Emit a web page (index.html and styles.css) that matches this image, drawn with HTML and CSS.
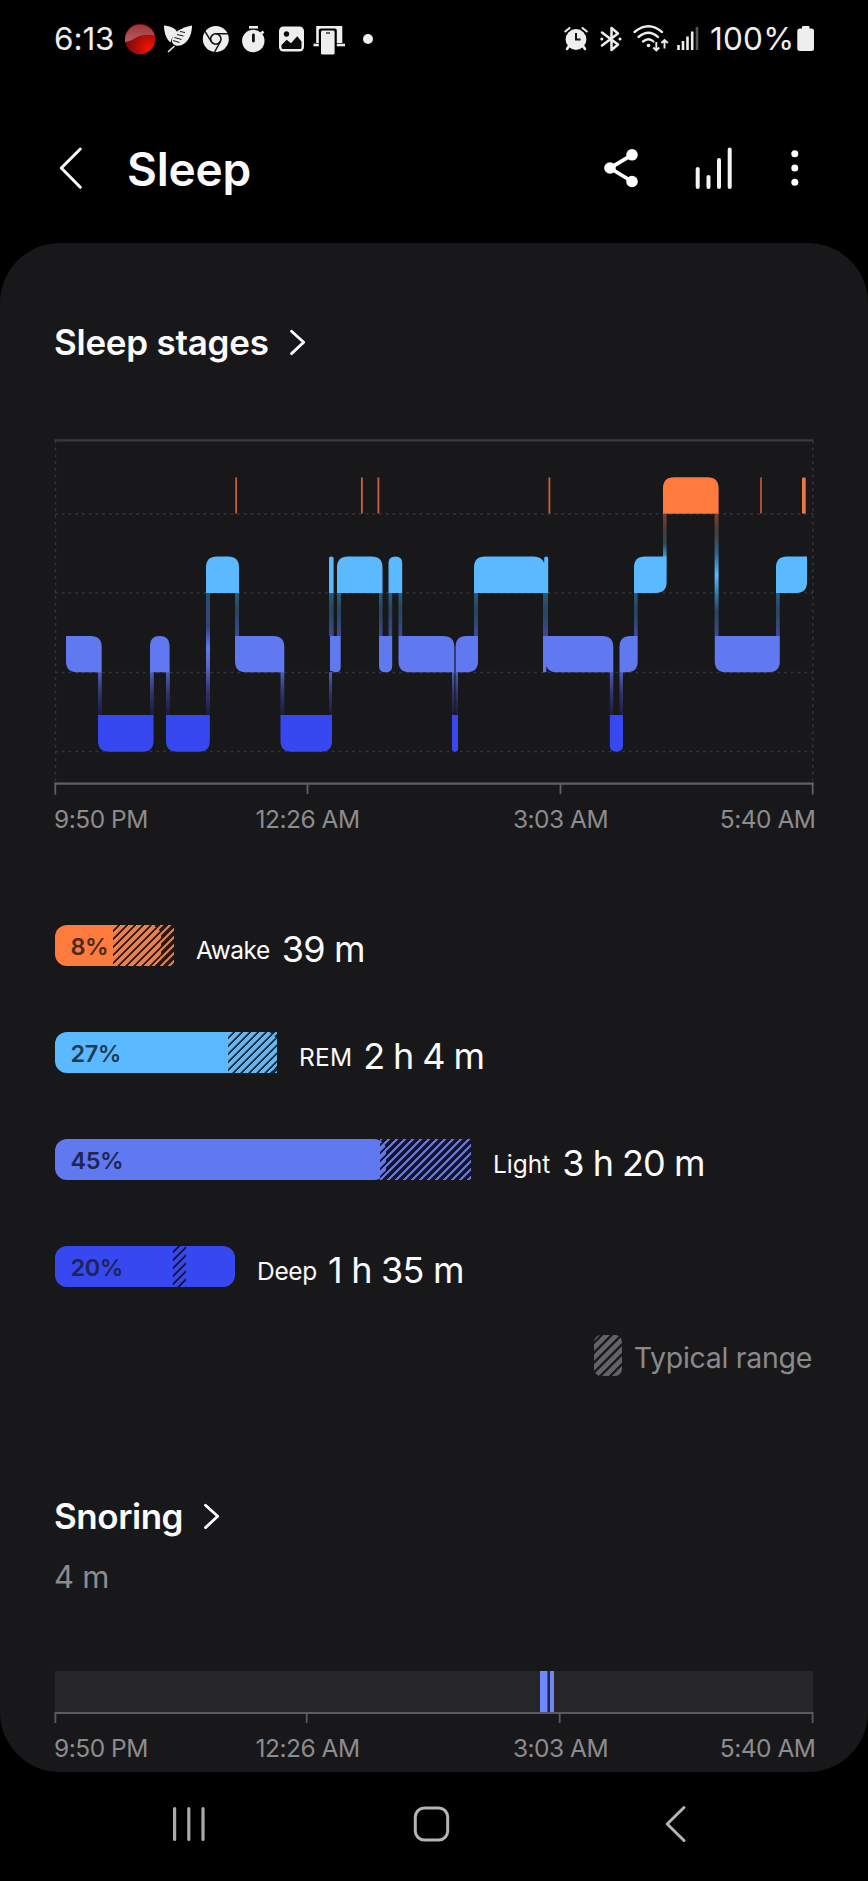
FILE: index.html
```html
<!DOCTYPE html>
<html lang="en">
<head>
<meta charset="utf-8">
<title>Sleep</title>
<link rel="stylesheet" href="styles.css">
</head>
<body>
<div class="status">
  <div class="status-side">
    <span class="clock">6:13</span>
    <svg width="35" height="34" viewBox="125 22 35 34">
      <defs>
        <linearGradient id="redTop" x1="0" y1="0" x2="0" y2="1"><stop offset="0" stop-color="#a0363c"/><stop offset="1" stop-color="#b45c5e"/></linearGradient>
        <radialGradient id="redBase" cx=".8" cy=".8" r=".8"><stop offset="0" stop-color="#f41404"/><stop offset=".5" stop-color="#b40c08"/><stop offset="1" stop-color="#6c0a0c"/></radialGradient>
      </defs>
      <circle cx="140" cy="39" r="15.3" fill="url(#redBase)"/>
      <path d="M125 42A15.3 15.3 0 0 1 154.8 35.5C146 33.5 138 36 133 39.500Q129 41.500 125 42Z" fill="url(#redTop)"/>
    </svg>
    <svg width="38" height="34" viewBox="160 22 38 34">
      <path d="M164 25.500C170 26 175.500 28 177.500 32.500C173 35.500 171 39 170.500 42.500C166 39 164 32 164 25.500Z" fill="#eee"/>
      <path d="M192 25.500C183 27 172.500 32 171.800 40C171.700 43.500 174.500 46 178 45.800C187 45 192 36 192 25.500Z" fill="#eee"/>
      <path d="M174 46.500L168.500 51.500" stroke="#eee" stroke-width="1.600" stroke-linecap="round"/>
      <path d="M180 31.500L185 32.500M177 34.500L183.500 36M174.500 37.500L181.500 39.500M173 40.500L179.500 42.500" stroke="#111" stroke-width="1"/>
    </svg>
    <svg width="37" height="34" viewBox="198 22 37 34">
      <circle cx="215.800" cy="39" r="13" fill="#eee"/>
      <circle cx="215.800" cy="39" r="5.200" fill="#eee" stroke="#111" stroke-width="1.600"/>
      <path d="M215.800 33.800H228M220.300 41.600L214.600 52M211.300 41.600L205 31.300" stroke="#111" stroke-width="1.500" fill="none"/>
    </svg>
    <svg width="37" height="34" viewBox="235 22 37 34">
      <circle cx="253.300" cy="41" r="11.200" fill="#eee"/>
      <path d="M249 27.300H258" stroke="#eee" stroke-width="2.600"/>
      <path d="M260 34.500L263.500 31.500" stroke="#eee" stroke-width="2.600"/>
      <path d="M253.400 35V41" stroke="#111" stroke-width="2.800" stroke-linecap="round"/>
    </svg>
    <svg width="37" height="34" viewBox="272 22 37 34">
      <rect x="279" y="26.500" width="25" height="25" rx="4.500" fill="#eee"/>
      <circle cx="286.500" cy="34" r="2.700" fill="#0a0a0a"/>
      <path d="M281.500 45L286.700 39.800L291 43.300L297.200 36.300L301.500 41.500V47.500Q301.500 49 300 49H283Q281.500 49 281.500 47.500Z" fill="#0a0a0a"/>
    </svg>
    <svg width="41" height="34" viewBox="309 22 41 34">
      <path d="M317.500 43V27.200H341V43" fill="#eee" stroke="#eee" stroke-width="2.600"/>
      <path d="M313.500 45H345" stroke="#eee" stroke-width="2.600"/>
      <rect x="318.800" y="28.500" width="18" height="27" rx="2" fill="#000"/>
      <rect x="321" y="30.600" width="13.600" height="24" rx="1.500" fill="#eee"/>
      <path d="M326 33H330" stroke="#333" stroke-width="1.500"/>
    </svg>
    <svg width="30" height="34" viewBox="350 22 30 34"><circle cx="368" cy="39" r="5" fill="#eee"/></svg>
  </div>
  <div class="status-side">
    <svg width="34" height="34" viewBox="560 22 34 34">
      <circle cx="576" cy="39.500" r="10.400" fill="#eee"/>
      <path d="M565.300 31.500L569.500 28M582.500 28L586.800 31.500" stroke="#eee" stroke-width="2" stroke-linecap="round"/>
      <path d="M569 46L567 49M583 46L585 49" stroke="#eee" stroke-width="2.600" stroke-linecap="round"/>
      <path d="M576 33V39.500H580.500" stroke="#111" stroke-width="2" fill="none"/>
    </svg>
    <svg width="34" height="34" viewBox="594 22 34 34">
      <path d="M602 32.500L618 44.500L611.500 50V28L618 33.500L602 45.500" stroke="#eee" stroke-width="2.500" fill="none" stroke-linejoin="round" stroke-linecap="round"/>
      <circle cx="601.800" cy="39" r="1.500" fill="#eee"/><circle cx="620" cy="39" r="1.600" fill="#eee"/>
    </svg>
    <svg width="45" height="34" viewBox="628 22 45 34">
      <g fill="none" stroke="#eee" stroke-width="2.300" stroke-linecap="round">
        <path d="M634.500 32Q648.500 20.500 662 32"/><path d="M638.500 37Q648.500 28.500 658 37"/><path d="M643 41.500Q648.500 37 653.500 41.500"/>
      </g>
      <circle cx="648.500" cy="45.500" r="1.800" fill="#eee"/>
      <path d="M656.300 42V50M653.300 47.500L656.300 50.500L659.300 47.500M664.500 48.500V40.500M661.500 43L664.500 40L667.800 43" stroke="#eee" stroke-width="1.900" fill="none"/>
    </svg>
    <svg width="32" height="34" viewBox="673 22 32 34">
      <path d="M678.500 45V50M683 41V50M687.500 36.500V50M692.200 31.500V50" stroke="#eee" stroke-width="2.600"/>
      <path d="M697 27V50" stroke="#555" stroke-width="2.600"/>
    </svg>
    <span class="battery-text">100%</span>
    <svg width="26" height="34" viewBox="794 22 26 34"><path d="M800 28.500H802V27Q802 26 803 26H808.500Q809.500 26 809.500 27V28.500H811.500Q814 28.500 814 31V48.500Q814 51 811.500 51H800Q797.300 51 797.300 48.500V31Q797.300 28.500 800 28.500Z" fill="#eee"/></svg>
  </div>
</div>

<header class="appbar">
  <svg width="74" height="50" viewBox="55 143 74 50"><path d="M80.300 149L61.300 168L80.300 187.300" fill="none" stroke="#fff" stroke-width="3" stroke-linecap="round" stroke-linejoin="round"/></svg>
  <h1 class="title">Sleep</h1>
  <div class="actions">
    <svg width="90" height="50" viewBox="595 143 90 50">
      <path d="M632 154.800L610 168L632 181.500" fill="none" stroke="#fff" stroke-width="3.800"/>
      <circle cx="632" cy="154.800" r="5.800" fill="#fff"/><circle cx="610" cy="168" r="5.800" fill="#fff"/><circle cx="632" cy="181.500" r="5.800" fill="#fff"/>
    </svg>
    <svg width="75" height="50" viewBox="685 143 75 50"><path d="M697.700 169V187M708.500 177V187M719 160V187M729.700 149.500V187" stroke="#f4f4f4" stroke-width="4" stroke-linecap="round"/></svg>
    <svg width="53" height="50" viewBox="760 143 53 50"><g fill="#fff"><circle cx="794.800" cy="153.800" r="3.500"/><circle cx="794.800" cy="168" r="3.500"/><circle cx="794.800" cy="182.200" r="3.500"/></g></svg>
  </div>
</header>

<main class="card">
  <h2 class="heading heading-stages"><span>Sleep stages</span>
    <svg width="18" height="28" viewBox="289 327 18 28"><path d="M291.500 330.300L303.700 341.300L291.500 352.600" fill="none" stroke="#fff" stroke-width="2.800" stroke-linecap="round" stroke-linejoin="round"/></svg>
  </h2>

  <svg class="chart" width="768" height="360" viewBox="50 436 768 360">
    <defs>
      <linearGradient id="ar" gradientUnits="userSpaceOnUse" x1="0" y1="514" x2="0" y2="557"><stop offset="0" stop-color="#7a402a"/><stop offset=".35" stop-color="#443c3c"/><stop offset=".7" stop-color="#2c4a5c"/><stop offset="1" stop-color="#459bd4"/></linearGradient>
      <linearGradient id="rl" gradientUnits="userSpaceOnUse" x1="0" y1="593" x2="0" y2="636"><stop offset="0" stop-color="#245c7c"/><stop offset=".4" stop-color="#28445f"/><stop offset="1" stop-color="#3c4990"/></linearGradient>
      <linearGradient id="ld" gradientUnits="userSpaceOnUse" x1="0" y1="672" x2="0" y2="715"><stop offset="0" stop-color="#4f5db4"/><stop offset=".5" stop-color="#30346c"/><stop offset="1" stop-color="#1c1b40"/></linearGradient>
      <linearGradient id="through" gradientUnits="userSpaceOnUse" x1="0" y1="593" x2="0" y2="715"><stop offset="0" stop-color="#24506c"/><stop offset=".28" stop-color="#36437c"/><stop offset=".45" stop-color="#6279ee"/><stop offset=".6" stop-color="#5866cc"/><stop offset=".8" stop-color="#30346c"/><stop offset="1" stop-color="#1c1b40"/></linearGradient>
      <linearGradient id="drop" gradientUnits="userSpaceOnUse" x1="0" y1="514" x2="0" y2="636"><stop offset="0" stop-color="#7a402a"/><stop offset=".15" stop-color="#443c3c"/><stop offset=".32" stop-color="#2c6488"/><stop offset=".5" stop-color="#5bbaff"/><stop offset=".66" stop-color="#307aa8"/><stop offset=".8" stop-color="#28445f"/><stop offset="1" stop-color="#3c4990"/></linearGradient>
    </defs>
    <g stroke="#353537" stroke-width="1.500" stroke-dasharray="2.800 3.950">
      <path d="M55 514H813M55 593H813M55 672.500H813M55 751.500H813M55.500 441V783M812.800 441V783"/>
    </g>
    <path d="M54.500 440.300H813.500" stroke="#3b3b3d" stroke-width="2.200"/>
    <path d="M54.500 783.700H813.500" stroke="#616163" stroke-width="2.200"/>
    <path d="M55.300 783V794.500M307.500 783V794M560.500 783V794M812.700 783V794.500" stroke="#616163" stroke-width="1.800"/>
    <g fill="url(#ld)">
      <path d="M98 672h3.800v43h-3.800zM150 672h3.800v43h-3.800zM166 672h3.800v43h-3.800zM280.500 672h3.800v43h-3.800zM329 672h3v43h-3zM452 672h2.300v43h-2.300zM455.500 672h2.500v43h-2.500zM609.800 672h3.500v43h-3.500zM619.500 672h3.500v43h-3.500z"/>
    </g>
    <g fill="url(#rl)">
      <path d="M235 593h4v43h-4zM329 593h4.600v43h-4.600zM337 593h4v43h-4zM379 593h3.500v43h-3.500zM388.500 593h3.700v43h-3.700zM398.500 593h3.700v43h-3.700zM474 593h4v43h-4zM543 593h5v43h-5zM634 593h3.700v43h-3.700zM776 593h3.800v43h-3.800z"/>
    </g>
    <path d="M663 514h3.600v43h-3.600z" fill="url(#ar)"/>
    <path d="M206 593h4v122h-4z" fill="url(#through)"/>
    <path d="M714.600 514h4v122h-4z" fill="url(#drop)"/>
    <g fill="#ff7b3d">
      <path d="M663 513.700V488.500Q663 477.300 674 477.300H707.500Q718.600 477.300 718.600 488.500V513.700Z"/>
      <rect x="802" y="477.500" width="3.700" height="36.200" rx="1.300" fill="#ee7544"/>
    </g>
    <g fill="#c8633d">
      <rect x="235.300" y="477.500" width="1.700" height="36"/><rect x="361" y="477.500" width="1.800" height="36"/><rect x="377.500" y="477.500" width="1.800" height="36"/><rect x="548.500" y="477.500" width="1.800" height="36"/><rect x="760.200" y="477.500" width="1.600" height="36"/>
    </g>
    <g fill="#5bbaff">
      <path d="M206 593V567.500Q206 556.500 217 556.500H228Q239 556.500 239 567.500V593Z"/>
      <path d="M329 593V558q0-1.500 2.300-1.500t2.300 1.500V593Z"/>
      <path d="M337 593V567.500Q337 556.500 348 556.500H371.500Q382.500 556.500 382.500 567.500V593Z"/>
      <path d="M388.500 593V563Q388.500 556.500 395.400 556.500T402.200 563V593Z"/>
      <path d="M474 593V567.500Q474 556.500 485 556.500H533.500Q542 556.500 544.200 563V558q0-1.500 2-1.500t2 1.500V593Z"/>
      <path d="M634 593V567.500Q634 556.500 645 556.500H666.600V582Q666.600 593 655.500 593Z"/>
      <path d="M776 593V567.500Q776 556.500 787 556.500H807V582Q807 593 796 593Z"/>
    </g>
    <g fill="#6179f0">
      <path d="M66 636H90.500Q101.700 636 101.700 647V672.300H77Q66 672.300 66 661.300Z"/>
      <path d="M150 672.300V645.500Q150 636 159.700 636T169.600 645.500V672.300Z"/>
      <path d="M235 636H273.300Q284.300 636 284.300 647V672.300H246Q235 672.300 235 661.300Z"/>
      <path d="M330 636H340.700V667Q340.700 672.300 336 672.300Q334 672.300 332 671H330Z"/>
      <path d="M379 636H392.200V666Q392.200 672.300 385.600 672.300T379 666Z"/>
      <path d="M398.500 636H443Q454.300 636 454.300 647V672.300H409.500Q398.500 672.300 398.500 661.300Z"/>
      <path d="M455.600 672.300V647Q455.600 636 466.500 636H478V661.300Q478 672.300 467 672.300Z"/>
      <path d="M543 636H602.300Q613.300 636 613.300 647V672.300H557Q548.500 672.300 546.300 666V672.300H543Z"/>
      <path d="M619.500 672.300V647Q619.500 636 630.500 636H637.700V661.300Q637.700 672.300 627 672.300Z"/>
      <path d="M714.800 636H779.800V661.300Q779.800 672.300 768.800 672.300H725.800Q714.800 672.300 714.800 661.300Z"/>
    </g>
    <path d="M455 647V672" stroke="#343c80" stroke-width="1.500"/>
    <g fill="#3848f0">
      <path d="M98 715H153.500V740.700Q153.500 751.700 142.500 751.700H109Q98 751.700 98 740.700Z"/>
      <path d="M166 715H209.800V740.700Q209.800 751.700 198.800 751.700H177Q166 751.700 166 740.700Z"/>
      <path d="M280.500 715H332V740.700Q332 751.700 321 751.700H291.500Q280.500 751.700 280.500 740.700Z"/>
      <path d="M452 715H458V749Q458 751.700 455 751.700T452 749Z"/>
      <path d="M609.800 715H623V745.500Q623 751.700 616.400 751.700T609.800 745.500Z"/>
    </g>
  </svg>
  <div class="axis"><span>9:50 PM</span><span>12:26 AM</span><span>3:03 AM</span><span>5:40 AM</span></div>

  <div class="stages">
    <div class="stage awake">
      <div class="track" style="width:119px"><div class="range" style="left:58px;width:61px"></div><div class="fill" style="width:106px"><div class="over" style="left:58px;width:48px"></div><span class="pct">8%</span></div></div>
      <span class="name">Awake</span><span class="value">39 m</span>
    </div>
    <div class="stage rem">
      <div class="track" style="width:222px"><div class="range" style="left:173px;width:49px"></div><div class="fill" style="width:222px"><div class="over" style="left:173px;width:49px"></div><span class="pct">27%</span></div></div>
      <span class="name">REM</span><span class="value">2 h 4 m</span>
    </div>
    <div class="stage light">
      <div class="track" style="width:416px"><div class="range" style="left:325px;width:91px"></div><div class="fill" style="width:331px"><div class="over" style="left:325px;width:6px"></div><span class="pct">45%</span></div></div>
      <span class="name">Light</span><span class="value">3 h 20 m</span>
    </div>
    <div class="stage deep">
      <div class="track" style="width:180px"><div class="fill" style="width:180px"><div class="over" style="left:118px;width:13px"></div><span class="pct">20%</span></div></div>
      <span class="name">Deep</span><span class="value">1 h 35 m</span>
    </div>
  </div>
  <div class="legend"><i class="swatch"></i><span>Typical range</span></div>

  <h2 class="heading heading-snoring"><span>Snoring</span>
    <svg width="18" height="28" viewBox="289 327 18 28"><path d="M291.500 330.300L303.700 341.300L291.500 352.600" fill="none" stroke="#fff" stroke-width="2.800" stroke-linecap="round" stroke-linejoin="round"/></svg>
  </h2>
  <p class="snore-total">4 m</p>
  <svg class="snore" width="768" height="54" viewBox="50 1671 768 54">
    <rect x="55" y="1671" width="758" height="42" fill="#262628"/>
    <rect x="540" y="1671" width="14" height="42" fill="#20244a"/>
    <rect x="540" y="1671" width="7.400" height="42" fill="#7088ff"/><rect x="550" y="1671" width="4" height="42" fill="#7088ee"/>
    <path d="M54.500 1713H813.500" stroke="#5b5b5d" stroke-width="2.200"/>
    <path d="M55.400 1713V1723M306.700 1713V1723M559.700 1713V1723M812.600 1713V1723" stroke="#5b5b5d" stroke-width="1.800"/>
  </svg>
  <div class="axis"><span>9:50 PM</span><span>12:26 AM</span><span>3:03 AM</span><span>5:40 AM</span></div>
</main>

<nav class="navbar">
  <svg width="50" height="50" viewBox="164 1799 50 50"><path d="M174.600 1808.500V1839.500M188.800 1808.500V1839.500M203 1808.500V1839.500" stroke="#aaa" stroke-width="3.200" stroke-linecap="round"/></svg>
  <svg width="50" height="50" viewBox="407 1799 50 50"><rect x="415.300" y="1808" width="32.400" height="32" rx="9" fill="none" stroke="#b4b4b4" stroke-width="3"/></svg>
  <svg width="50" height="50" viewBox="650 1799 50 50"><path d="M684 1807.500L667.200 1824L684 1840.500" fill="none" stroke="#b4b4b4" stroke-width="3" stroke-linecap="round" stroke-linejoin="round"/></svg>
</nav>
</body>
</html>
```
FILE: styles.css
```css
* { box-sizing: border-box; }

body {
  margin: 0;
  width: 868px;
  height: 1881px;
  overflow: hidden;
  background: #000;
  color: #fafafa;
  font-family: Inter, Roboto, sans-serif;
  display: flex;
  flex-direction: column;
}

svg { display: block; flex: none; }
h1, h2, p { margin: 0; }
span { white-space: nowrap; }

/* Status bar */
.status {
  height: 78px;
  padding: 0 48px 0 54px;
  display: flex;
  justify-content: space-between;
  align-items: center;
}
.status-side { display: flex; align-items: center; color: #eee; font-size: 31.500px; line-height: 34px; }
.clock { width: 71px; letter-spacing: -0.100px; }
.battery-text { width: 89px; padding-left: 5px; letter-spacing: 0.200px; }

/* App bar */
.appbar {
  height: 165px;
  padding: 65px 55px 0;
  display: flex;
  align-items: flex-start;
}
.title { flex: 1; font-size: 46px; font-weight: 600; line-height: 53px; letter-spacing: -0.200px; margin-left: -2px; }
.actions { display: flex; }

/* Card */
.card {
  height: 1529px;
  padding: 79px 55px 0;
  border-radius: 60px;
  background: #18181a;
  display: flex;
  flex-direction: column;
}
.heading {
  display: flex;
  align-items: center;
  height: 40px;
  margin-left: -1px;
  font-size: 35px;
  font-weight: 600;
  line-height: 40px;
}
.heading-stages { gap: 20px; letter-spacing: -0.250px; }
.heading-snoring { gap: 20px; letter-spacing: -0.450px; margin-top: 120px; }

.chart { margin: 74px 0 0 -5px; }
.axis {
  display: grid;
  grid-template-columns: 126px 253px 253px 126px;
  height: 30px;
  margin-top: 8px;
  font-size: 24.500px;
  line-height: 30px;
  letter-spacing: -0.500px;
  text-align: center;
  color: #8c8c8e;
}
.axis span:first-child { text-align: left; margin-left: -1px; }
.axis span:last-child { text-align: right; margin-right: -2.500px; }

/* Stage bars */
.stages { display: flex; flex-direction: column; gap: 66px; margin-top: 91px; }
.stage { display: flex; height: 41px; }
.track { position: relative; flex: none; height: 41px; margin-right: 22px; }
.range { position: absolute; top: 0; height: 41px; background: repeating-linear-gradient(135deg, var(--line) 0 1.500px, var(--dark) 2.200px 5px, var(--line) 5.660px); }
.fill { position: relative; height: 41px; border-radius: 12px; overflow: hidden; background: var(--color); }
.over { position: absolute; top: 0; height: 41px; background: repeating-linear-gradient(135deg, var(--soft) 0 3.200px, var(--dark) 3.900px 5px, var(--soft) 5.660px); }
.pct { position: absolute; left: 15.500px; top: 7px; font-size: 23.500px; font-weight: 600; line-height: 30px; letter-spacing: -0.500px; color: var(--ink); }
.name { font-size: 24.500px; line-height: 50px; letter-spacing: -0.500px; margin-right: 12px; }
.value { font-size: 36px; line-height: 48px; letter-spacing: -0.800px; }
.awake { --color: #ff7b3d; --soft: #e8814f; --line: #d97d50; --dark: #32150a; --ink: #4a2a1c; }
.rem { --color: #5bbaff; --soft: #68b6ee; --line: #68b6ee; --dark: #0e2c48; --ink: #1d3c54; }
.light { --color: #6179f0; --soft: #6179e0; --line: #6c78cc; --dark: #11132e; --ink: #1f2750; }
.deep { --color: #3848f0; --soft: #3c49d8; --line: #3c49d8; --dark: #10123c; --ink: #1c2458; }
.rem .name { letter-spacing: 0.200px; margin-right: 11px; }
.rem .value { letter-spacing: -1.100px; }
.light .name { letter-spacing: 0; }
.light .value { letter-spacing: -1px; }
.deep .name { letter-spacing: -0.300px; margin-right: 11px; }

.legend {
  display: flex;
  justify-content: flex-end;
  align-items: center;
  gap: 12px;
  height: 41px;
  margin-top: 48px;
  padding-right: 1px;
  font-size: 28.500px;
  letter-spacing: -0.300px;
  color: #8a8a8c;
}
.legend span { padding-top: 3px; }
.swatch { width: 28px; height: 41px; border-radius: 7px; background: repeating-linear-gradient(135deg, #636365 0 4px, #1c1c1e 4.600px 6.400px, #636365 7px); }

.snore-total { height: 40px; margin: 21px 0 0 -1px; font-size: 31px; line-height: 40px; letter-spacing: -0.200px; color: #8c8c8e; }
.snore { margin: 74px 0 0 -5px; }

/* System navigation */
.navbar { height: 109px; padding: 27px 168px 0 164px; display: flex; justify-content: space-between; }
```
